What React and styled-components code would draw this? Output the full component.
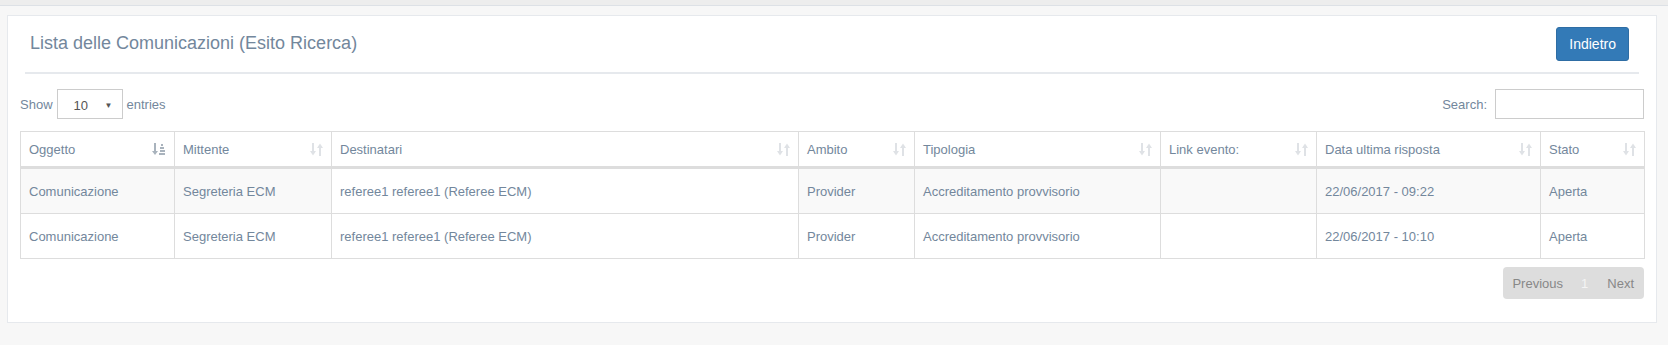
import React from 'react';
import styled, { createGlobalStyle } from 'styled-components';

const GlobalStyle = createGlobalStyle`
  * { box-sizing: border-box; }
  body {
    margin: 0;
    background: #f7f7f7;
    font-family: "Liberation Sans", Arial, sans-serif;
    font-size: 13px;
    color: #73879c;
  }
`;

const TopBar = styled.div`
  height: 6px;
  background: #ededed;
  border-bottom: 1px solid #dde1e6;
`;

const Main = styled.div`
  padding: 9px 11px 0 7px;
`;

const Panel = styled.div`
  background: #fff;
  border: 1px solid #e6e9ed;
  padding: 10px 17px 10px;
`;

const PanelHeader = styled.div`
  display: flex;
  justify-content: space-between;
  align-items: flex-start;
  padding: 1px 5px 11px;
  border-bottom: 2px solid #e6e9ed;
`;

const Title = styled.h2`
  margin: 0;
  font-size: 18px;
  font-weight: 400;
  line-height: 33px;
  color: #73879c;
`;

const Button = styled.button`
  height: 34px;
  padding: 0 12px;
  margin-right: 5px;
  background: #337ab7;
  border: 1px solid #2e6da4;
  border-radius: 3px;
  color: #fff;
  font-family: inherit;
  font-size: 14px;
`;

const Content = styled.div`
  margin: 0 -5px;
  padding-top: 15px;
`;

const Controls = styled.div`
  display: flex;
  justify-content: space-between;
  align-items: center;
  height: 30px;
`;

const Label = styled.label`
  display: flex;
  align-items: center;
  gap: 4px;
`;

const SelectBox = styled.div`
  display: flex;
  justify-content: space-between;
  align-items: center;
  width: 66px;
  height: 30px;
  padding: 2px 9px 0 16px;
  border: 1px solid #ccc;
  color: #555;
  font-size: 13px;
`;

const Caret = styled.span`
  font-size: 8px;
  color: #555;
`;

const SearchInput = styled.input`
  width: 149px;
  height: 30px;
  margin-left: 4px;
  border: 1px solid #ccc;
  outline: none;
`;

const Table = styled.table`
  width: 1624px;
  margin-top: 12px;
  table-layout: fixed;
  border-collapse: separate;
  border-spacing: 0;
  border-top: 1px solid #ddd;
  border-left: 1px solid #ddd;
`;

const Th = styled.th`
  height: 37px;
  padding: 0 8px;
  text-align: left;
  font-weight: 400;
  border-right: 1px solid #ddd;
  border-bottom: 3px solid #ddd;
  width: ${({ $w }) => $w}px;
`;

const ThInner = styled.div`
  display: flex;
  justify-content: space-between;
  align-items: center;
`;

const Row = styled.tr`
  background: ${({ $striped }) => ($striped ? '#f9f9f9' : '#fff')};
`;

const Td = styled.td`
  height: 45px;
  padding: 0 8px;
  border-right: 1px solid #ddd;
  border-bottom: 1px solid #ddd;
  background: ${({ $plain }) => ($plain ? '#fff' : 'transparent')};
`;

const Footer = styled.div`
  display: flex;
  justify-content: flex-end;
  margin-top: 8px;
  margin-bottom: 13px;
`;

const Pager = styled.div`
  display: flex;
  align-items: center;
  height: 32px;
  background: #dddddd;
  border-radius: 4px;
`;

const PageItem = styled.span`
  padding: 0 ${({ $pad }) => $pad || '9px'};
  color: ${({ $current }) => ($current ? '#f4f4f4' : '#888')};
`;

const SortIcon = ({ active }) =>
  active ? (
    <svg width="14" height="13" viewBox="0 0 14 13">
      <g fill="#a9b3bd">
        <rect x="2" y="0" width="2" height="9" />
        <polygon points="0,8 6,8 3,12" />
        <rect x="9" y="1" width="2" height="2" />
        <rect x="8" y="4" width="4" height="2" />
        <rect x="8" y="7" width="5" height="2" />
        <rect x="7" y="10" width="6" height="2" />
      </g>
    </svg>
  ) : (
    <svg width="13" height="13" viewBox="0 0 13 13">
      <g fill="#dfe2e6">
        <rect x="2" y="0" width="2" height="9" />
        <polygon points="0,8 6,8 3,12.5" />
        <rect x="9" y="4" width="2" height="9" />
        <polygon points="7,5 13,5 10,0.5" />
      </g>
    </svg>
  );

const columns = [
  { label: 'Oggetto', w: 154, active: true },
  { label: 'Mittente', w: 157 },
  { label: 'Destinatari', w: 467 },
  { label: 'Ambito', w: 116 },
  { label: 'Tipologia', w: 246 },
  { label: 'Link evento:', w: 156 },
  { label: 'Data ultima risposta', w: 224 },
  { label: 'Stato', w: 104 },
];

const rows = [
  ['Comunicazione', 'Segreteria ECM', 'referee1 referee1 (Referee ECM)', 'Provider', 'Accreditamento provvisorio', '', '22/06/2017 - 09:22', 'Aperta'],
  ['Comunicazione', 'Segreteria ECM', 'referee1 referee1 (Referee ECM)', 'Provider', 'Accreditamento provvisorio', '', '22/06/2017 - 10:10', 'Aperta'],
];

export default function App() {
  return (
    <>
      <GlobalStyle />
      <TopBar />
      <Main>
        <Panel>
          <PanelHeader>
            <Title>Lista delle Comunicazioni (Esito Ricerca)</Title>
            <Button>Indietro</Button>
          </PanelHeader>
          <Content>
            <Controls>
              <Label>
                Show
                <SelectBox>
                  <span>10</span>
                  <Caret>▼</Caret>
                </SelectBox>
                entries
              </Label>
              <Label>
                Search:
                <SearchInput />
              </Label>
            </Controls>
            <Table>
              <thead>
                <tr>
                  {columns.map((c) => (
                    <Th key={c.label} $w={c.w}>
                      <ThInner>
                        {c.label}
                        <SortIcon active={c.active} />
                      </ThInner>
                    </Th>
                  ))}
                </tr>
              </thead>
              <tbody>
                {rows.map((r, i) => (
                  <Row key={i} $striped={i % 2 === 0}>
                    {r.map((cell, j) => (
                      <Td key={j} $plain={i === 0 && j === 2}>
                        {cell}
                      </Td>
                    ))}
                  </Row>
                ))}
              </tbody>
            </Table>
            <Footer>
              <Pager>
                <PageItem>Previous</PageItem>
                <PageItem $current>1</PageItem>
                <PageItem $pad="10px">Next</PageItem>
              </Pager>
            </Footer>
          </Content>
        </Panel>
      </Main>
    </>
  );
}
